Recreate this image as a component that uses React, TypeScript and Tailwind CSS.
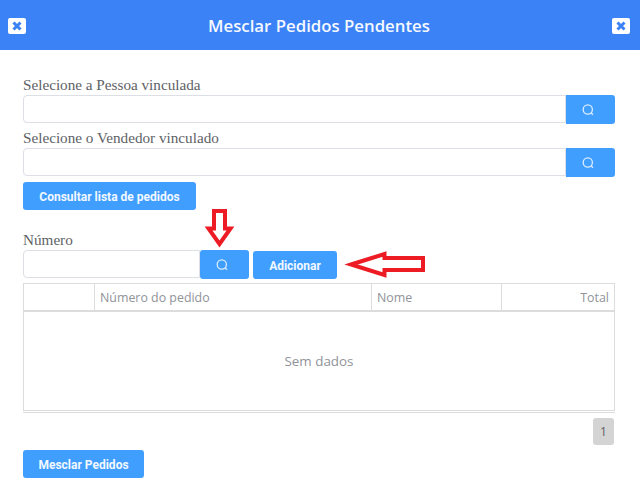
import React from "react";

const serif = "[font-family:'Liberation_Serif',serif]";

function SearchIcon() {
  return (
    <svg className="mr-[6px]" width="14" height="14" viewBox="0 0 14 14" fill="none" stroke="#dbeeff" strokeWidth="1.3">
      <circle cx="6.8" cy="6.5" r="4.6" />
      <path d="M10 9.7l2 2" />
    </svg>
  );
}

function CloseBox() {
  return (
    <button className="flex h-4 w-[18px] items-center justify-center rounded-[2px] bg-white">
      <svg width="10" height="10" viewBox="0 0 10 10" fill="none" stroke="#3b82f6" strokeWidth="3">
        <path d="M1.5 1.5l7 7M8.5 1.5l-7 7" />
      </svg>
    </button>
  );
}

function PrimaryButton({ children, className }: { children: React.ReactNode; className: string }) {
  return (
    <button className={`flex items-center justify-center rounded-[3px] bg-[#409eff] pt-px text-[12px] font-bold text-[#f2f8ff] [font-family:'Roboto',sans-serif] ${className}`}>
      {children}
    </button>
  );
}

function SearchRow({ label }: { label: string }) {
  return (
    <div>
      <div className={`h-[19px] text-[15.2px] leading-[17px] text-[#606266] ${serif}`}>{label}</div>
      <div className="flex items-start">
        <div className="h-7 flex-1 rounded-l-[4px] border border-[#dcdfe6] bg-white" />
        <PrimaryButton className="h-[29px] w-[49px] rounded-l-none"><SearchIcon /></PrimaryButton>
      </div>
    </div>
  );
}

export default function App() {
  return (
    <div className="relative h-[504px] w-[640px] overflow-hidden bg-white">
      <header className="flex h-[50px] items-center justify-between bg-[#3b82f6] pl-2 pr-2.5 pt-[1px]">
        <CloseBox />
        <h1 className="text-[16.8px] font-semibold text-[#f5f9ff] [font-family:'Open_Sans',sans-serif]">Mesclar Pedidos Pendentes</h1>
        <CloseBox />
      </header>

      <main className="px-[25px] pl-[23px] pt-[26px]">
        <SearchRow label="Selecione a Pessoa vinculada" />
        <div className="mt-[5px]"><SearchRow label="Selecione o Vendedor vinculado" /></div>
        <PrimaryButton className="mt-[5px] h-7 w-[173px]">Consultar lista de pedidos</PrimaryButton>

        <div className={`mt-[20px] h-[20px] text-[15.2px] leading-[20px] text-[#606266] ${serif}`}>Número</div>
        <div className="flex items-start">
          <div className="h-7 w-[177px] rounded-l-[4px] border border-[#dcdfe6] bg-white" />
          <PrimaryButton className="h-[29px] w-[49px]"><SearchIcon /></PrimaryButton>
          <PrimaryButton className="ml-1 mt-px h-7 w-[84px]">Adicionar</PrimaryButton>
        </div>

        <div className="mt-[4px] w-[592px] border-b border-[#dcdcdc] pb-[1px] [font-family:'Open_Sans',sans-serif] text-[12.4px] text-[#909399]">
          <div className="border border-[#dcdcdc]">
            <div className="flex h-[28px] items-center border-b-2 border-[#dcdcdc]">
              <div className="h-full w-[71px] border-r border-[#dcdcdc]" />
              <div className="flex h-full w-[277px] items-center border-r border-[#dcdcdc] px-[5px] pt-[2px]">Número do pedido</div>
              <div className="flex h-full w-[130px] items-center border-r border-[#dcdcdc] px-[5px] pt-[2px]">Nome</div>
              <div className="flex h-full flex-1 items-center justify-end px-[5px] pt-[2px]">Total</div>
            </div>
            <div className="flex h-[98px] items-center justify-center text-[13.4px]">Sem dados</div>
          </div>
        </div>

        <div className="mt-[5px] flex w-[591px] justify-end">
          <div className="flex h-[27px] w-[21px] items-center justify-center rounded-[3px] bg-[#d4d4d4] pt-px text-[12px] text-[#606266] [font-family:'Open_Sans',sans-serif]">1</div>
        </div>

        <PrimaryButton className="mt-[5px] h-7 w-[121px]">Mesclar Pedidos</PrimaryButton>
      </main>

      <svg className="absolute left-[204px] top-[209px]" width="31" height="42" viewBox="0 0 31 42" fill="none" stroke="#ed1c24" strokeWidth="4">
        <path d="M10 2h11v17.5h5.5L15.5 35 4.5 19.5H10z" />
      </svg>
      <svg className="absolute left-[344px] top-[249px]" width="84" height="32" viewBox="0 0 84 32" fill="none" stroke="#ed1c24" strokeWidth="4">
        <path d="M7 15.5L40.5 5v4H79v12H40.5v5z" />
      </svg>
    </div>
  );
}
